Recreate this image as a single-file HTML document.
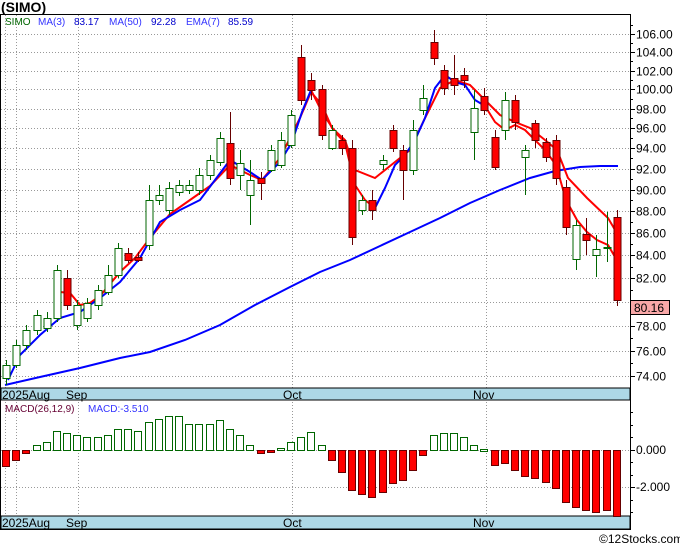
<!DOCTYPE html><html><head><meta charset="utf-8"><style>
body{margin:0;background:#fff;width:680px;height:546px;overflow:hidden;font-family:"Liberation Sans",sans-serif}
svg text{font-family:"Liberation Sans",sans-serif}
</style></head><body>
<svg id="s" width="680" height="546" xmlns="http://www.w3.org/2000/svg">
<text x="1" y="12" font-size="14" font-weight="bold">(SIMO)</text>
<rect x="0.5" y="14.5" width="630" height="515" fill="none" stroke="#000"/>
<g id="grid" stroke="#999" stroke-dasharray="1,2" stroke-width="1"></g>
<rect x="1" y="388" width="629" height="12" fill="#add8e6" stroke="#000"/>
<rect x="1" y="516" width="629" height="13" fill="#add8e6" stroke="#000"/>
<g font-size="12" fill="#000">
<text x="2" y="399">2025Aug</text><text x="66" y="399">Sep</text><text x="283" y="399">Oct</text><text x="473" y="399">Nov</text>
<text x="2" y="527">2025Aug</text><text x="66" y="527">Sep</text><text x="283" y="527">Oct</text><text x="473" y="527">Nov</text>
</g>
<g font-size="10"><text x="5" y="25" fill="#060">SIMO</text><text x="38" y="25" fill="#33f">MA(3)</text><text x="74" y="25" fill="#00c">83.17</text><text x="109" y="25" fill="#33f">MA(50)</text><text x="151" y="25" fill="#00c">92.28</text><text x="186" y="25" fill="#33f">EMA(7)</text><text x="228" y="25" fill="#00c">85.59</text>
<text x="5" y="412" fill="#603">MACD(26,12,9)</text><text x="88" y="412" fill="#33f">MACD:-3.510</text></g>
<g id="ax" font-size="12" fill="#000"></g>
<g id="c"></g>
<text x="599" y="543" font-size="12">©12Stocks.com</text>
</svg>
<script>
const NS="http://www.w3.org/2000/svg",S=document.getElementById('s');
function el(p,t,a){const e=document.createElementNS(NS,t);for(const k in a)e.setAttribute(k,a[k]);p.appendChild(e);return e}
const g=document.getElementById('grid'),ax=document.getElementById('ax'),C=document.getElementById('c');
const Y=p=>4472.6-951.8*Math.log(p);
for(let p=74;p<=106;p+=2){const y=Math.round(Y(p))+.5;el(g,'line',{x1:1,x2:630,y1:y,y2:y});el(ax,'line',{x1:630,x2:635,y1:y,y2:y,stroke:'#000'});if(p!=80){const t=el(ax,'text',{x:636,y:y+4});t.textContent=p.toFixed(2)}
const y2=Math.round(Y(p+1))+.5;el(ax,'line',{x1:630,x2:633,y1:y2,y2:y2,stroke:'#000'})}
[5,16,78,292,486].forEach(x=>{el(g,'line',{x1:x+.5,x2:x+.5,y1:15,y2:529})});
[450,487].forEach(y=>{el(g,'line',{x1:1,x2:630,y1:y+.5,y2:y+.5});el(ax,'line',{x1:630,x2:635,y1:y+.5,y2:y+.5,stroke:'#000'})});
let t=el(ax,'text',{x:636,y:454});t.textContent='0.000';t=el(ax,'text',{x:636,y:491});t.textContent='-2.000';
[412,425,437,462,475,500,512].forEach(y=>el(ax,'line',{x1:630,x2:633,y1:y+.5,y2:y+.5,stroke:'#000'}));
const d=[[365,378,360,385,'g'],[345,365,340,368,'g'],[330,345,325,350,'g'],[315,330,310,335,'g'],[318,328,312,332,'g'],[270,318,265,322,'g'],[278,305,270,310,'r'],[305,325,300,330,'g'],[303,318,298,322,'g'],[290,305,285,310,'g'],[275,292,265,295,'g'],[248,275,243,278,'g'],[253,260,248,263,'r'],[257,260,252,262,'r'],[200,245,185,250,'g'],[195,200,185,205,'g'],[188,210,182,215,'g'],[185,192,180,196,'g'],[185,190,180,194,'g'],[175,190,168,195,'g'],[160,175,155,180,'g'],[138,162,132,166,'g'],[143,178,112,185,'r'],[163,175,150,190,'g'],[180,195,160,225,'g'],[178,183,172,200,'r'],[150,170,145,172,'g'],[140,165,132,168,'g'],[115,145,110,148,'g'],[57,100,45,105,'r'],[80,90,73,100,'r'],[89,135,85,140,'r'],[130,148,125,150,'g'],[140,148,135,155,'r'],[148,237,140,245,'r'],[200,210,195,215,'g'],[200,210,190,220,'r'],[160,164,155,170,'g'],[130,148,125,152,'r'],[150,170,145,200,'r'],[130,170,120,175,'g'],[98,110,85,115,'g'],[42,58,30,65,'r'],[70,88,65,95,'r'],[78,85,55,95,'r'],[75,80,68,88,'r'],[108,132,90,160,'g'],[96,110,88,115,'r'],[137,167,130,170,'r'],[100,130,92,140,'g'],[100,122,95,130,'r'],[150,157,145,195,'g'],[123,140,120,148,'r'],[142,157,138,162,'r'],[140,178,135,185,'r'],[187,227,180,235,'r'],[225,259,220,270,'g'],[234,240,218,255,'r'],[249,255,235,277,'g'],[247,248,212,262,'g'],[217,300,210,306,'r']];
const X=i=>6+10.18*i;
const m=[-16,-10,-3,5,8,19,17,15,13,13,15,21,21,19,28,31,34,34,26,26,26,30,21,15,5,-3,-1,2,8,13,18,5,-10,-22,-40,-44,-47,-42,-33,-30,-20,-5,15,17,17,13,5,1,-15,-13,-20,-26,-28,-32,-38,-52,-57,-60,-62,-60,-66];
m.forEach((h,i)=>{const x=Math.round(X(i))-3.5;const top=h>0?450-h:450,hh=Math.max(Math.abs(h),2);
el(C,'rect',{x:x,y:top+.5,width:7,height:hh,fill:h>0?'#fff':'#f00',stroke:h>0?'#060':'#600'})});
function line(pts,col){el(C,'polyline',{points:pts.map(p=>p.join(',')).join(' '),fill:'none',stroke:col,'stroke-width':2})}
line([[5,385],[40,377],[80,368],[120,358],[150,352],[185,340],[220,325],[255,305],[290,287],[320,272],[350,260],[380,246],[410,232],[440,218],[470,203],[500,190],[530,178],[555,171],[580,167],[600,166],[618,166]],'#00f');
line([[60,292],[70,293],[80,305],[90,303],[100,296],[120,272],[135,258],[150,238],[170,214],[190,200],[210,186],[230,165],[250,175],[262,180],[280,158],[300,118],[311,92],[322,105],[332,128],[345,140],[355,170],[375,178],[395,162],[410,150],[425,118],[440,88],[455,80],[470,85],[485,100],[500,115],[515,122],[530,128],[545,140],[557,150],[568,178],[587,198],[608,218],[618,235]],'#f00');
line([[8,380],[20,355],[40,335],[60,318],[80,312],[100,298],[120,282],[140,258],[160,222],[180,210],[200,200],[215,180],[230,160],[250,172],[262,180],[280,162],[292,142],[302,112],[311,90]],'#00f');
line([[311,90],[322,112],[335,132],[345,143],[355,185],[365,200],[375,208]],'#f00');
line([[375,208],[385,188],[395,165],[405,155],[415,140],[425,118],[435,88],[445,75],[455,82],[465,85],[475,100],[485,106]],'#00f');
line([[485,106],[495,122],[505,130],[515,125],[525,130],[535,140],[545,150],[556,165],[566,200],[577,220],[587,232],[597,240],[608,245],[618,262]],'#f00');
d.forEach((c,i)=>{const x=Math.round(X(i));const col=c[4]=='g'?'#060':'#600';
el(C,'line',{x1:x+.5,x2:x+.5,y1:c[2],y2:c[3],stroke:col});
el(C,'rect',{x:x-3,y:c[0]+.5,width:7,height:Math.max(c[1]-c[0],1),fill:c[4]=='g'?'#fff':'#f00',stroke:col})});
el(C,'rect',{x:630.5,y:300.5,width:39,height:14,fill:'#f9a8a8',stroke:'#000'});
const tt=el(C,'text',{x:634,y:312,'font-size':12});tt.textContent='80.16';
</script>
</body></html>
